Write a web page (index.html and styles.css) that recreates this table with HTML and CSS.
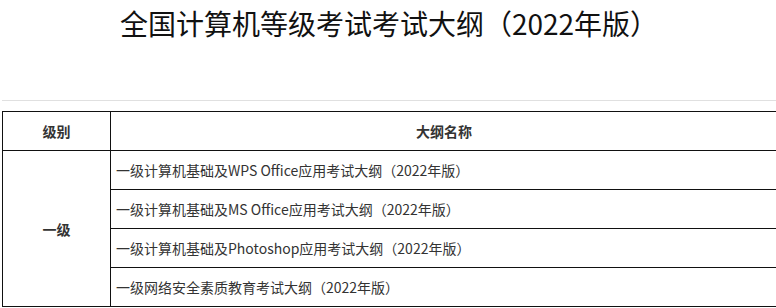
FILE: index.html
```html
<!DOCTYPE html>
<html lang="zh-CN">
<head>
  <meta charset="UTF-8">
  <meta name="viewport" content="width=device-width, initial-scale=1.0">
  <title>全国计算机等级考试考试大纲（2022年版）</title>
  <link rel="stylesheet" href="styles.css">
</head>
<body>

  <div class="article-head">
    <h1>全国计算机等级考试考试大纲（2022年版）</h1>
  </div>

  <div class="table-wrap">
    <table class="outline-table">
      <thead>
        <tr>
          <th class="col-level">级别</th>
          <th>大纲名称</th>
        </tr>
      </thead>
      <tbody>
        <tr>
          <td class="col-level level-name" rowspan="4">一级</td>
          <td>一级计算机基础及WPS Office应用考试大纲（2022年版）</td>
        </tr>
        <tr>
          <td>一级计算机基础及MS Office应用考试大纲（2022年版）</td>
        </tr>
        <tr>
          <td>一级计算机基础及Photoshop应用考试大纲（2022年版）</td>
        </tr>
        <tr>
          <td>一级网络安全素质教育考试大纲（2022年版）</td>
        </tr>
      </tbody>
    </table>
  </div>

</body>
</html>
```

FILE: styles.css
```css
body {
  margin: 0;
  background-color: #fff;
  font-family: "Noto Sans CJK SC", sans-serif;
  color: #333;
  overflow: hidden;
}

/* 标题区 */
.article-head {
  height: 100px;
  margin-left: 2px;
  border-bottom: 1px solid #e0e0e0;
}

.article-head h1 {
  margin: 0;
  font-size: 28px;
  font-weight: normal;
  line-height: 46px;
  color: #111;
  text-align: center;
}

/* 大纲表格 */
.table-wrap {
  margin: 10px 0 0 2px;
  overflow: hidden;
}

.outline-table {
  width: 790px;
  border-collapse: collapse;
  font-size: 14px;
}

.outline-table th,
.outline-table td {
  height: 38px;
  padding: 0 5px;
  border: 1px solid #111;
  text-align: left;
  vertical-align: middle;
  line-height: 20px;
}

.outline-table th {
  font-weight: bold;
  text-align: center;
  color: #333;
}

.outline-table th:last-child {
  padding-right: 19px;
}

.col-level {
  width: 97px;
}

.outline-table .level-name {
  font-weight: bold;
  text-align: center;
}
```
